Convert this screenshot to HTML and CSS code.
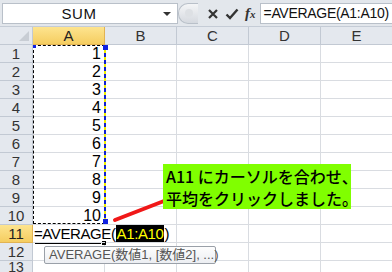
FILE: index.html
```html
<!DOCTYPE html>
<html>
<head>
<meta charset="utf-8">
<link rel="stylesheet" href="styles.css">
</head>
<body>
<div class="app">
  <div class="fbar">
    <div class="namebox"><span class="nb-text">SUM</span><span class="nb-arrow"></span></div>
    <div class="knob"></div>
    <div class="fbtns">
      <svg class="ico" width="12" height="12" viewBox="0 0 12 12"><path d="M2 2 L10 10 M10 2 L2 10" stroke="#333" stroke-width="2.2" fill="none"/></svg>
      <svg class="ico" width="14" height="12" viewBox="0 0 14 12"><path d="M1.5 6.5 L5 10 L12.5 1.5" stroke="#333" stroke-width="2.4" fill="none"/></svg>
      <span class="fx"><i>f</i><i class="x">x</i></span>
    </div>
    <div class="finput">=AVERAGE(A1:A10)</div>
  </div>
  <div class="sheet">
    <div class="grid">
      <div class="corner"><span class="tri"></span></div>
      <div class="ch sel">A</div><div class="ch">B</div><div class="ch">C</div><div class="ch">D</div><div class="ch">E</div>

      <div class="rh">1</div><div class="c num">1</div><div class="c"></div><div class="c"></div><div class="c"></div><div class="c"></div>
      <div class="rh">2</div><div class="c num">2</div><div class="c"></div><div class="c"></div><div class="c"></div><div class="c"></div>
      <div class="rh">3</div><div class="c num">3</div><div class="c"></div><div class="c"></div><div class="c"></div><div class="c"></div>
      <div class="rh">4</div><div class="c num">4</div><div class="c"></div><div class="c"></div><div class="c"></div><div class="c"></div>
      <div class="rh">5</div><div class="c num">5</div><div class="c"></div><div class="c"></div><div class="c"></div><div class="c"></div>
      <div class="rh">6</div><div class="c num">6</div><div class="c"></div><div class="c"></div><div class="c"></div><div class="c"></div>
      <div class="rh">7</div><div class="c num">7</div><div class="c"></div><div class="c"></div><div class="c"></div><div class="c"></div>
      <div class="rh">8</div><div class="c num">8</div><div class="c"></div><div class="c"></div><div class="c"></div><div class="c"></div>
      <div class="rh">9</div><div class="c num">9</div><div class="c"></div><div class="c"></div><div class="c"></div><div class="c"></div>
      <div class="rh">10</div><div class="c num">10</div><div class="c"></div><div class="c"></div><div class="c"></div><div class="c"></div>
      <div class="rh sel">11</div><div class="c edit">=AVERAGE(<span class="ref">A1:A10</span>)</div><div class="c nb"></div><div class="c"></div><div class="c"></div><div class="c"></div>
      <div class="rh">12</div><div class="c"></div><div class="c"></div><div class="c"></div><div class="c"></div><div class="c"></div>
      <div class="rh last">13</div><div class="c"></div><div class="c"></div><div class="c"></div><div class="c"></div><div class="c"></div>
    </div>

    <div class="ants"><span class="ants-r"></span><span class="h h1"></span><span class="h h2"></span><span class="h h3"></span></div>
    <div class="uline"></div><div class="usq"></div>
    <div class="tip">AVERAGE(数値1, [数値2], ...)</div>
    <svg class="arrow" width="60" height="30" viewBox="0 0 60 30"><path d="M3 25 L52 6" stroke="#f01818" stroke-width="4" stroke-linecap="round"/></svg>
    <div class="callout"><div>A11 にカーソルを合わせ、</div><div>平均をクリックしました。</div></div>
  </div>
</div>
</body>
</html>
```
FILE: styles.css
```css
* { box-sizing: border-box; }
html, body { margin: 0; padding: 0; }
body { width: 392px; height: 272px; overflow: hidden; background: #fff; font-family: "Liberation Sans", Arial, "Noto Sans CJK JP", sans-serif; }
.app { width: 392px; height: 272px; overflow: hidden; }

.fbar { height: 27px; background: #e3e7ec; display: flex; align-items: flex-start; padding: 3px 0 0 2px; border-bottom: 1px solid #c5ccd6; position: relative; }
.namebox { width: 176px; height: 21px; background: #fff; border: 1px solid #b9c0c9; display: flex; align-items: center; position: relative; }
.nb-text { flex: 1; text-align: center; font-size: 15px; color: #111; padding-right: 22px; letter-spacing: 0.5px; }
.nb-arrow { position: absolute; right: 6px; top: 8px; width: 0; height: 0; border-left: 4px solid transparent; border-right: 4px solid transparent; border-top: 4px solid #333; }
.knob { width: 20px; height: 21px; border-radius: 10px 0 0 10px; background: linear-gradient(#f4f5f7, #d5d9df); border: 1px solid #b9c0c9; border-right: none; position: relative; }
.knob::after { content: ""; position: absolute; left: 6px; top: 5px; width: 8px; height: 8px; border-radius: 50%; background: #dde0e4; }
.fbtns { display: flex; align-items: center; gap: 6px; height: 21px; padding: 0 4px 0 9px; }
.fx { font-family: "Liberation Serif", serif; font-size: 15px; color: #333; font-weight: bold; }
.fx .x { font-size: 11px; }
.finput { flex: 1; height: 21px; background: #fff; border: 1px solid #b9c0c9; border-right: none; font-size: 14px; line-height: 19px; padding-left: 3px; color: #111; white-space: nowrap; overflow: hidden; letter-spacing: -0.3px; }

.sheet { position: relative; }
.grid { display: grid; grid-template-columns: 33px repeat(5, 72px); grid-auto-rows: 18px; }
.corner, .ch, .rh { background: #e4e8ee; border-right: 1px solid #c2c9d3; border-bottom: 1px solid #c2c9d3; color: #333; font-size: 15px; display: flex; align-items: center; justify-content: center; }
.rh.last { align-items: flex-start; padding-top: 1px; font-size: 14px; line-height: 10px; overflow: hidden; }
.corner { position: relative; }
.tri { position: absolute; right: 3px; bottom: 3px; width: 0; height: 0; border-left: 10px solid transparent; border-bottom: 10px solid #c8cdd4; }
.ch.sel, .rh.sel { background: linear-gradient(#fde48f, #f5cd60); border-color: #e2b352; color: #222; }
.c { border-right: 1px solid #d9dce1; border-bottom: 1px solid #d9dce1; font-size: 16px; color: #000; line-height: 17px; }
.c.num { text-align: right; padding-right: 3px; }
.c.edit { white-space: nowrap; overflow: visible; border-right: none; position: relative; z-index: 2; padding-left: 1px; font-size: 15px; letter-spacing: -0.4px; }
.ref { background: #000; color: #ffff00; padding: 0 1px; }

.ants { position: absolute; left: 33px; top: 18px; width: 72px; height: 179px; border: 1px dashed #000; border-right: none; }
.ants-r { position: absolute; right: -1px; top: 0; width: 2px; height: 100%; background: repeating-linear-gradient(#1020d0 0 4px, #f0f000 4px 7px); }
.h { position: absolute; background: #1020e0; }
.h1 { left: -1px; top: -1px; width: 3px; height: 3px; }
.h2 { right: -3px; top: -1px; width: 5px; height: 5px; }
.h3 { right: -3px; bottom: -1px; width: 5px; height: 5px; }
.uline { position: absolute; left: 35px; top: 215px; width: 66px; height: 2px; background: #000; }
.usq { position: absolute; left: 102px; top: 214px; width: 4px; height: 4px; background: #000; }
.tip { position: absolute; left: 44px; top: 219px; width: 172px; height: 18px; background: linear-gradient(#fdfdfd, #eceef2); border: 1px solid #9aa0a8; border-radius: 2px; font-size: 13px; color: #555; line-height: 16px; padding-left: 4px; white-space: nowrap; z-index: 3; }
.arrow { position: absolute; left: 112px; top: 168px; }
.callout { position: absolute; left: 163px; top: 137px; width: 188px; height: 45px; background: #80ff00; font-size: 16px; line-height: 22px; padding: 1px 0 0 3px; color: #000; font-family: "Noto Sans CJK JP", sans-serif; font-weight: 500; white-space: nowrap; display: flex; flex-direction: column; }
```
